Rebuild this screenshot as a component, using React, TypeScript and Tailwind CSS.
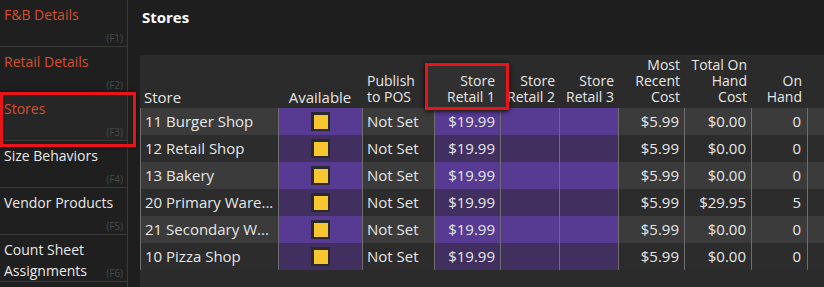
import React from 'react';

const NAV = [
  { label: 'F&B Details', key: 'F1', accent: true },
  { label: 'Retail Details', key: 'F2', accent: true },
  { label: 'Stores', key: 'F3', accent: true, active: true },
  { label: 'Size Behaviors', key: 'F4' },
  { label: 'Vendor Products', key: 'F5' },
  { label: 'Count Sheet Assignments', key: 'F6' },
];

const ROWS = [
  { store: '11 Burger Shop', total: '$0.00', onHand: '0' },
  { store: '12 Retail Shop', total: '$0.00', onHand: '0' },
  { store: '13 Bakery', total: '$0.00', onHand: '0' },
  { store: '20 Primary Ware...', total: '$29.95', onHand: '5' },
  { store: '21 Secondary W...', total: '$0.00', onHand: '0' },
  { store: '10 Pizza Shop', total: '$0.00', onHand: '0' },
];

function Checkbox() {
  return (
    <div className="w-[19px] h-[19px] bg-[#2a2a2a] flex items-center justify-center">
      <div className="w-[14px] h-[14px] bg-[#f8c630]" />
    </div>
  );
}

export default function App() {
  return (
    <div className="relative w-[824px] h-[287px] overflow-hidden flex bg-[#1e1e1e] text-[#e6e6e6] font-['Open_Sans',sans-serif]">
      {/* Sidebar */}
      <div className="w-[128px] shrink-0 flex flex-col border-r border-[#3a3a3a]">
        {NAV.map((item) => (
          <div
            key={item.key}
            className={
              'relative h-[47px] shrink-0 border-b border-[#3a3a3a] px-[4px] pt-[4px] ' +
              (item.active ? 'bg-[#262626]' : 'bg-[#1f1f1f]')
            }
          >
            <div
              className={
                'text-[14px] leading-[21px] ' +
                (item.accent ? 'text-[#d4502e]' : 'text-[#e8e8e8]')
              }
            >
              {item.label}
            </div>
            <span className="absolute right-[4px] bottom-[0px] text-[10px] text-[#4a4a4a]">({item.key})</span>
          </div>
        ))}
      </div>

      {/* Main */}
      <div className="flex-1 flex flex-col pl-[12px]">
        <div className="h-[55px] shrink-0 pt-[6px] pl-[2px] text-[15px] font-bold text-white">Stores</div>

        <div className="flex-1 bg-[#2b2b2b] text-[15px]">
          {/* Header */}
          <div className="h-[53px] flex items-end text-[14px] leading-[16px] pb-[3px] whitespace-nowrap">
            <div className="w-[138px] px-[4px] text-[15px]">Store</div>
            <div className="w-[84px] text-center text-[15px]">Available</div>
            <div className="w-[72px] px-[5px]">Publish<br />to POS</div>
            <div className="relative w-[66px] px-[5px] text-right">
              <div className="absolute left-[-8px] right-[-8px] top-[-7px] bottom-[-6px] bg-[#303030] shadow-[0_0_5px_rgba(0,0,0,0.7)]" />
              <div className="relative">Store<br />Retail 1</div>
            </div>
            <div className="w-[59px] px-[4px] text-right">Store<br />Retail 2</div>
            <div className="w-[59px] px-[4px] text-right">Store<br />Retail 3</div>
            <div className="w-[66px] px-[4px] text-right">Most<br />Recent<br />Cost</div>
            <div className="w-[67px] px-[4px] text-right">Total On<br />Hand<br />Cost</div>
            <div className="w-[56px] px-[5px] text-right">On<br />Hand</div>
          </div>

          {/* Rows */}
          {ROWS.map((r, i) => {
            const odd = i % 2 === 0;
            const gray = odd ? 'bg-[#3b3b3b]' : 'bg-[#2c2c2c]';
            const purple = odd ? 'bg-[#573a92]' : 'bg-[#41305f]';
            const cell = 'h-full flex items-center border-l border-[#6e6e6e] ';
            return (
              <div key={r.store} className="h-[27px] flex">
                <div className={cell + gray + ' w-[138px] px-[4px] whitespace-nowrap'}>{r.store}</div>
                <div className={cell + purple + ' w-[84px] justify-center'}>
                  <Checkbox />
                </div>
                <div className={cell + gray + ' w-[72px] px-[4px]'}>Not Set</div>
                <div className={cell + purple + ' w-[66px] px-[5px] justify-end'}>$19.99</div>
                <div className={cell + purple + ' w-[59px]'} />
                <div className={cell + purple + ' w-[59px]'} />
                <div className={cell + gray + ' w-[66px] px-[5px] justify-end'}>$5.99</div>
                <div className={cell + gray + ' w-[67px] px-[5px] justify-end'}>{r.total}</div>
                <div className={cell + gray + ' w-[56px] px-[6px] justify-end'}>{r.onHand}</div>
                <div className={cell + gray + ' flex-1'} />
              </div>
            );
          })}
        </div>
      </div>

      {/* Red annotation boxes */}
      <div className="absolute left-0 top-[92px] w-[136px] h-[55px] border-[3px] border-[#e8141a] shadow-[0_0_4px_rgba(0,0,0,0.6)]" />
      <div className="absolute left-[425px] top-[63px] w-[84px] h-[47px] border-[3px] border-[#e8141a] shadow-[0_0_4px_rgba(0,0,0,0.6)]" />
    </div>
  );
}
